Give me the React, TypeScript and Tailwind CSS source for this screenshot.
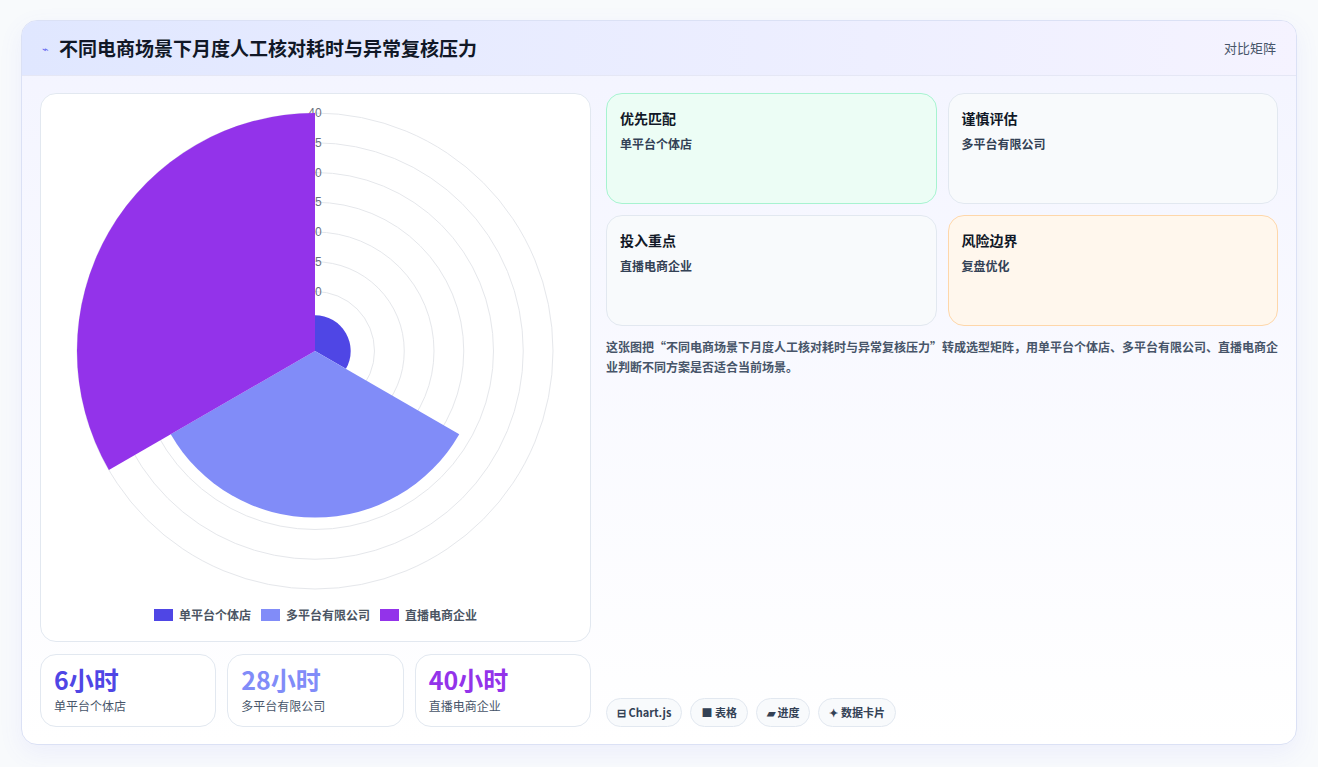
import React from "react";

const cx = 274, cy = 257, k = 238 / 40;
function arc(r: number, a0: number, a1: number) {
  const rad = (d: number) => (d * Math.PI) / 180;
  const x0 = cx + r * Math.cos(rad(a0)), y0 = cy + r * Math.sin(rad(a0));
  const x1 = cx + r * Math.cos(rad(a1)), y1 = cy + r * Math.sin(rad(a1));
  return `M${cx},${cy} L${x0},${y0} A${r},${r} 0 0 1 ${x1},${y1} Z`;
}

export default function App() {
  const f = { fontFamily: '"Noto Sans CJK SC", "Noto Sans", sans-serif' };
  const cards = [
    { t: "优先匹配", s: "单平台个体店", c: "bg-[#ecfdf5] border-[#a7f3d0]" },
    { t: "谨慎评估", s: "多平台有限公司", c: "bg-[#f8fafc] border-[#e2e8f0]" },
    { t: "投入重点", s: "直播电商企业", c: "bg-[#f8fafc] border-[#e2e8f0]" },
    { t: "风险边界", s: "复盘优化", c: "bg-[#fff7ed] border-[#fed7aa]" },
  ];
  const stats = [
    { v: "6小时", l: "单平台个体店", c: "text-[#4f46e5]" },
    { v: "28小时", l: "多平台有限公司", c: "text-[#818cf8]" },
    { v: "40小时", l: "直播电商企业", c: "text-[#9333ea]" },
  ];
  return (
    <div style={f} className="w-[1318px] h-[767px] bg-[#f8fafc] pt-[20px] px-[21px]">
      <div className="w-[1276px] h-[725px] rounded-2xl border border-[#dbe1f5] bg-gradient-to-b from-[#f3f4ff] to-white overflow-hidden shadow-[0_8px_24px_rgba(99,102,241,0.08)] flex flex-col">
        <div className="h-[55px] shrink-0 flex items-center justify-between px-[20px] bg-gradient-to-r from-[#e0e7ff] to-[#f5f3ff] border-b border-[#e5e7f5]">
          <div className="flex items-center gap-[10px]">
            <span className="text-[#6366f1] text-[11px]">⌁</span>
            <span className="text-[19px] font-bold text-[#111827]">不同电商场景下月度人工核对耗时与异常复核压力</span>
          </div>
          <span className="text-[13px] text-[#475569]">对比矩阵</span>
        </div>
        <div className="flex-1 flex gap-[15px] px-[18px] pt-[17px] pb-[18px]">
          <div className="w-[551px] flex flex-col gap-[12px]">
            <div className="h-[549px] rounded-2xl border border-[#e2e8f0] bg-white flex flex-col items-center">
              <svg width="549" height="500" className="mt-[0px]">
                {[1, 2, 3, 4, 5, 6, 7, 8].map((i) => (
                  <circle key={i} cx={cx} cy={cy} r={i * 5 * k} fill="none" stroke="#e5e7eb" strokeWidth="1" />
                ))}
                {[40, 35, 30, 25, 20, 15, 10].map((v) => (
                  <text key={v} x={cx} y={cy - v * k + 4} textAnchor="middle" fontSize="12" fill="#6b7280" fontFamily="Liberation Sans, sans-serif">{v}</text>
                ))}
                <path d={arc(6 * k, -90, 30)} fill="#4f46e5" />
                <path d={arc(28 * k, 30, 150)} fill="#818cf8" />
                <path d={arc(40 * k, 150, 270)} fill="#9333ea" />
              </svg>
              <div className="mt-[12px] flex gap-[10px] text-[12px] font-semibold text-[#4b5563]">
                {[["#4f46e5", "单平台个体店"], ["#818cf8", "多平台有限公司"], ["#9333ea", "直播电商企业"]].map(([c, l]) => (
                  <div key={l} className="flex items-center gap-[6px]">
                    <span className="w-[19px] h-[12px] inline-block" style={{ background: c }} />
                    {l}
                  </div>
                ))}
              </div>
            </div>
            <div className="flex gap-[11px]">
              {stats.map((s) => (
                <div key={s.l} className="flex-1 h-[73px] rounded-2xl border border-[#e2e8f0] bg-white px-[13px] pt-[8px]">
                  <div className={`text-[25px] font-bold leading-[32px] ${s.c}`}>{s.v}</div>
                  <div className="text-[12px] text-[#475569] mt-[2px]">{s.l}</div>
                </div>
              ))}
            </div>
          </div>
          <div className="flex-1 flex flex-col">
            <div className="grid grid-cols-2 gap-x-[11px] gap-y-[11px]">
              {cards.map((c) => (
                <div key={c.t} className={`h-[111px] rounded-2xl border ${c.c} px-[13px] pt-[14px]`}>
                  <div className="text-[14px] font-bold text-[#111827]">{c.t}</div>
                  <div className="text-[12px] font-semibold text-[#334155] mt-[6px]">{c.s}</div>
                </div>
              ))}
            </div>
            <p className="mt-[11px] text-[12px] font-semibold leading-[20px] text-[#475569]">
              这张图把“不同电商场景下月度人工核对耗时与异常复核压力”转成选型矩阵，用单平台个体店、多平台有限公司、直播电商企业判断不同方案是否适合当前场景。
            </p>
            <div className="mt-auto flex gap-[8px]">
              {["⊟ Chart.js", "■ 表格", "▰ 进度", "✦ 数据卡片"].map((t) => (
                <span key={t} className="h-[29px] px-[10px] flex items-center rounded-full border border-[#e2e8f0] bg-[#f8fafc] text-[11px] font-bold text-[#334155]">{t}</span>
              ))}
            </div>
          </div>
        </div>
      </div>
    </div>
  );
}
